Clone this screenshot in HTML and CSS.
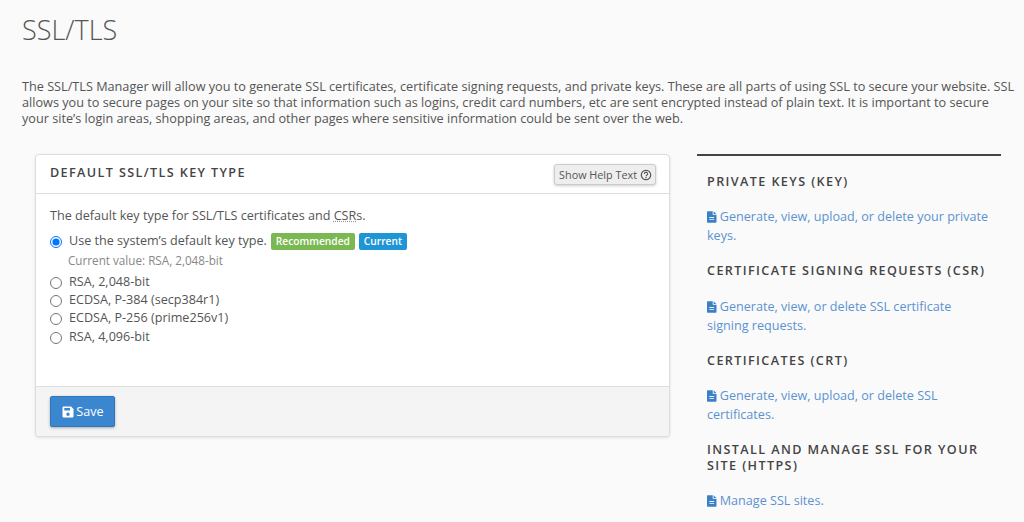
FILE: index.html
```html
<!DOCTYPE html>
<html lang="en">
<head>
<meta charset="utf-8">
<title>SSL/TLS</title>
<link rel="stylesheet" href="styles.css">
</head>
<body>
<h1 class="title">SSL/TLS</h1>
<p class="intro">The SSL/TLS Manager will allow you to generate SSL certificates, certificate signing requests, and private keys. These are all parts of using SSL to secure your website. SSL allows you to secure pages on your site so that information such as logins, credit card numbers, etc are sent encrypted instead of plain text. It is important to secure your site’s login areas, shopping areas, and other pages where sensitive information could be sent over the web.</p>
<div class="columns">
  <section class="panel">
    <header class="panel-head">
      <h2 class="panel-title">DEFAULT SSL/TLS KEY TYPE</h2>
      <button class="help-btn" type="button">Show Help Text
        <svg class="help-icon" viewBox="0 0 12 12"><circle cx="6" cy="6" r="4.7" fill="none" stroke="currentColor" stroke-width="1.2"/><path d="M4.4 4.9a1.6 1.5 0 1 1 2.5 1.2c-.6.4-.9.6-.9 1.2" fill="none" stroke="currentColor" stroke-width="1.1"/><rect x="5.4" y="8" width="1.2" height="1.2" fill="currentColor"/></svg>
      </button>
    </header>
    <div class="panel-body">
      <p class="lead">The default key type for SSL/TLS certificates and <abbr class="abbr">CSR</abbr>s.</p>
      <label class="opt"><input class="radio" type="radio" name="key" checked> Use the system’s default key type. <span class="badge green">Recommended</span><span class="badge blue">Current</span></label>
      <div class="note">Current value: RSA, 2,048-bit</div>
      <label class="opt"><input class="radio" type="radio" name="key"> RSA, 2,048-bit</label>
      <label class="opt"><input class="radio" type="radio" name="key"> ECDSA, P-384 (secp384r1)</label>
      <label class="opt"><input class="radio" type="radio" name="key"> ECDSA, P-256 (prime256v1)</label>
      <label class="opt"><input class="radio" type="radio" name="key"> RSA, 4,096-bit</label>
    </div>
    <footer class="panel-foot">
      <button class="save" type="button">
        <svg class="save-icon" viewBox="0 0 12 12"><path fill-rule="evenodd" d="M1.2 0.5H9L11.5 3V10.3a1.2 1.2 0 0 1-1.2 1.2H1.7A1.2 1.2 0 0 1 .5 10.3V1.7A1.2 1.2 0 0 1 1.2 .5ZM2.3 2V4.6H8V2ZM6 6.6a1.7 1.7 0 1 0 0 3.4a1.7 1.7 0 0 0 0-3.4Z" fill="currentColor"/></svg>
        Save</button>
    </footer>
  </section>
  <aside class="side">
    <h3 class="side-head">PRIVATE KEYS (KEY)</h3>
    <p class="side-link"><svg class="doc" viewBox="0 0 10 12"><path fill-rule="evenodd" d="M0.8 0H6V3.2a.8.8 0 0 0 .8.8H10V11.2a.8.8 0 0 1-.8.8H.8A.8.8 0 0 1 0 11.2V.8A.8.8 0 0 1 .8 0ZM7 0L10 3H7ZM2.5 6V7H7.5V6ZM2.5 8V9H7.5V8Z" fill="currentColor"/></svg> Generate, view, upload, or delete your private keys.</p>
    <h3 class="side-head">CERTIFICATE SIGNING REQUESTS (CSR)</h3>
    <p class="side-link"><svg class="doc" viewBox="0 0 10 12"><path fill-rule="evenodd" d="M0.8 0H6V3.2a.8.8 0 0 0 .8.8H10V11.2a.8.8 0 0 1-.8.8H.8A.8.8 0 0 1 0 11.2V.8A.8.8 0 0 1 .8 0ZM7 0L10 3H7ZM2.5 6V7H7.5V6ZM2.5 8V9H7.5V8Z" fill="currentColor"/></svg> Generate, view, or delete SSL certificate signing requests.</p>
    <h3 class="side-head">CERTIFICATES (CRT)</h3>
    <p class="side-link"><svg class="doc" viewBox="0 0 10 12"><path fill-rule="evenodd" d="M0.8 0H6V3.2a.8.8 0 0 0 .8.8H10V11.2a.8.8 0 0 1-.8.8H.8A.8.8 0 0 1 0 11.2V.8A.8.8 0 0 1 .8 0ZM7 0L10 3H7ZM2.5 6V7H7.5V6ZM2.5 8V9H7.5V8Z" fill="currentColor"/></svg> Generate, view, upload, or delete SSL certificates.</p>
    <h3 class="side-head">INSTALL AND MANAGE SSL FOR YOUR SITE (HTTPS)</h3>
    <p class="side-link"><svg class="doc" viewBox="0 0 10 12"><path fill-rule="evenodd" d="M0.8 0H6V3.2a.8.8 0 0 0 .8.8H10V11.2a.8.8 0 0 1-.8.8H.8A.8.8 0 0 1 0 11.2V.8A.8.8 0 0 1 .8 0ZM7 0L10 3H7ZM2.5 6V7H7.5V6ZM2.5 8V9H7.5V8Z" fill="currentColor"/></svg> Manage SSL sites.</p>
  </aside>
</div>
</body>
</html>
```
FILE: styles.css
```css
* { box-sizing: border-box; }
html, body { height: 522px; overflow: hidden; }
body { margin: 0; padding: 0 8px 0 22px; background: #fafafa; color: #555; font: 12.68px/16px "Open Sans", sans-serif; }
.title { margin: 0; padding-top: 11px; height: 78px; font-size: 27px; line-height: 38px; font-weight: 300; color: #555; }
.intro { margin: 0; height: 76px; color: #555; }
.columns { display: flex; align-items: flex-start; margin: 0 15px 0 13px; gap: 27px; }
.panel { flex: 0 0 635px; height: 283px; background: #fff; border: 1px solid #ddd; border-radius: 4px; box-shadow: 0 1px 3px rgba(0,0,0,.1); display: flex; flex-direction: column; }
.panel-head { height: 39px; flex: none; border-bottom: 1px solid #ddd; padding: 0 14px; display: flex; justify-content: space-between; align-items: center; }
.panel-title { margin: 0 0 3px; font-size: 12.6px; font-weight: 600; letter-spacing: 1.38px; color: #444; }
.help-btn { height: 21px; padding: 0 3px 0 4px; margin: 1px -1px 0 0; background: #eee; border: 1px solid #ccc; border-radius: 3px; box-shadow: 0 1px 3px rgba(0,0,0,.2); font: 10.8px "Open Sans", sans-serif; color: #555; display: flex; align-items: center; gap: 3px; }
.help-icon { width: 12px; height: 12px; }
.panel-body { flex: 1; padding: 14px 14px 0; font-size: 12.6px; }
.lead { margin: 0 0 8px; line-height: 16px; }
.abbr { text-decoration: underline dotted #999; }
.opt { display: flex; align-items: center; height: 18.4px; }
.radio { width: 12px; height: 12px; margin: 2px 7px 0 0; accent-color: #0075ff; flex: none; }
.badge { display: inline-block; height: 17px; line-height: 16px; padding: 0 5px; border-radius: 2px; color: #fff; font-size: 10.2px; font-weight: 600; margin-left: 4px; }
.green { background: #7ab851; }
.blue { background: #1e95d5; }
.note { margin: 2px 0 4px 18px; height: 16px; font-size: 11.7px; color: #888; }
.panel-foot { flex: none; height: 50px; border-top: 1px solid #ddd; background: #f4f4f4; padding: 9px 14px; border-radius: 0 0 4px 4px; }
.save { height: 31px; width: 65px; background: #3a87cf; border: 1px solid #2f78bd; border-radius: 2px; color: #fff; font: 12.6px "Open Sans", sans-serif; box-shadow: 0 1px 3px rgba(0,0,0,.3); display: flex; align-items: center; justify-content: center; gap: 2px; padding: 0 0 0 1px; }
.save-icon { width: 12px; height: 12px; }
.side { flex: 1; border-top: 2px solid #444; padding: 0 10px; }
.side-head { margin: 0; padding-top: 18px; font-size: 12.6px; line-height: 15.5px; font-weight: 600; letter-spacing: 1.4px; color: #444; }
.side-head:first-child { padding-top: 17.6px; }
.side-link { margin: 0; padding-top: 18px; line-height: 19px; color: #5a93d0; font-size: 12.6px; }
.doc { width: 9.5px; height: 12px; color: #3a80c9; vertical-align: -2px; }
```
